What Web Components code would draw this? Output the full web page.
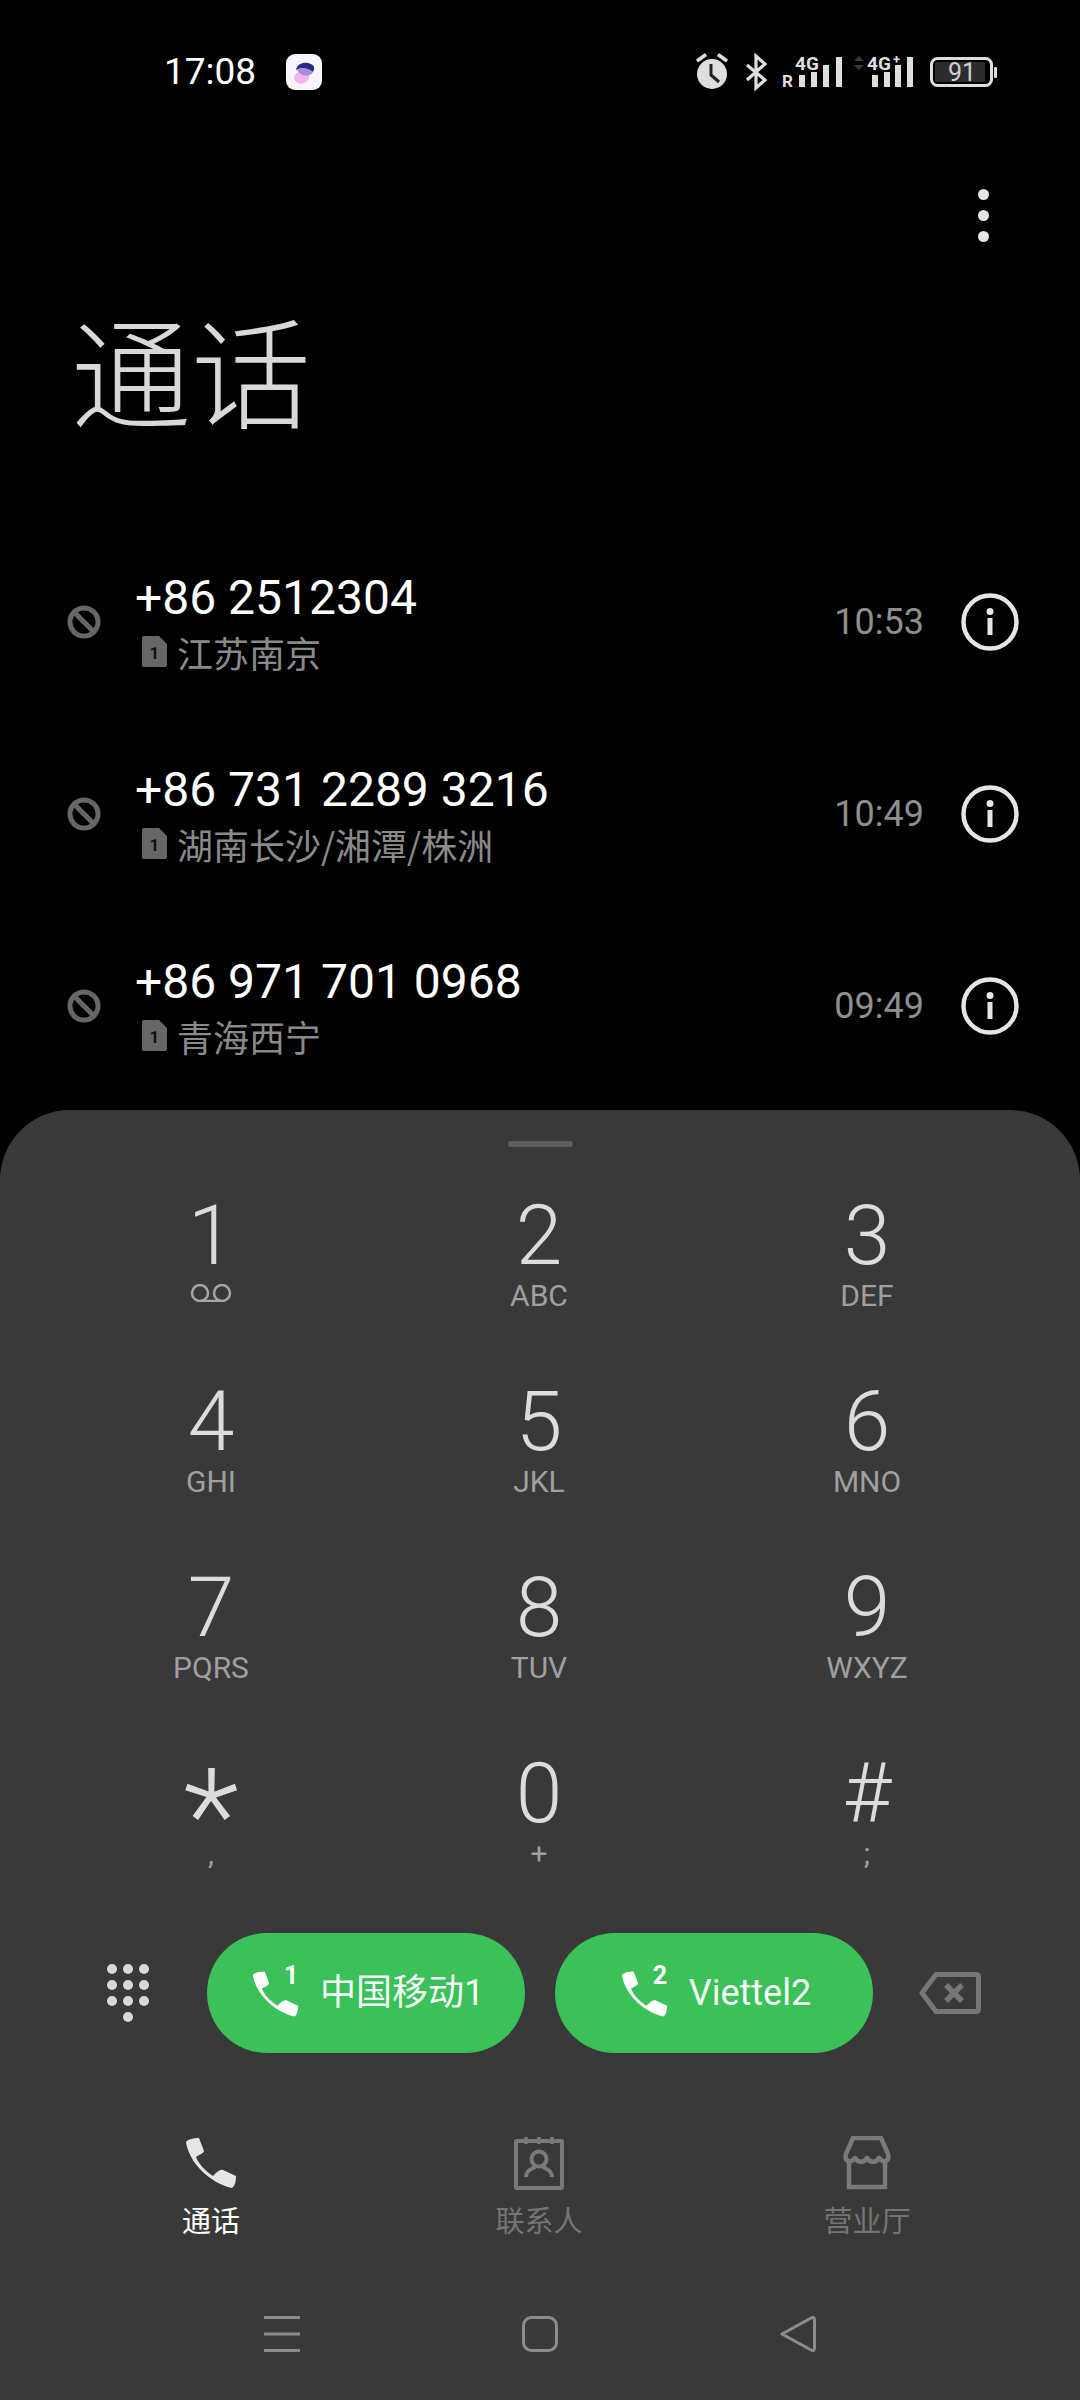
<!DOCTYPE html>
<html lang="zh-CN">
<head>
<meta charset="utf-8">
<title>通话</title>
<style>
html,body{margin:0;padding:0;background:#000}
body{font-family:Roboto,"Noto Sans CJK SC",sans-serif}
</style>
</head>
<body>
<phone-app></phone-app>
<script>
const FONT='Roboto,"Noto Sans CJK SC",sans-serif';
const PHONE='M1 4C3 1 9 0 14 0L19 13C19 15 14 17 11 19C13 25 20 33 28 38C31 35 35 31 38 32L51 38C51 43 50 48 47 50C25 45 4 25 1 4Z';
function def(name,html){
  customElements.define(name,class extends HTMLElement{
    connectedCallback(){
      if(this.shadowRoot)return;
      const r=this.attachShadow({mode:'open'});
      r.innerHTML=typeof html==='function'?html(this):html;
    }
  });
}
def('status-bar',`<style>
:host{display:flex;align-items:flex-start;height:110px;box-sizing:border-box;padding:54px 0 0 164px;color:#fff;font:37px/36px ${FONT}}
.time{width:122px}
.app{width:36px;height:36px;flex:none}
.right{margin-left:auto;margin-right:80px;flex:none;display:block;margin-top:-2px}
</style>
<span class="time">17:08</span>
<svg class="app" viewBox="0 0 36 36"><rect width="36" height="36" rx="9" fill="#f7f5fa"/><path d="M8 25C8 20 12 17 18 18C23 19 25 24 21 27C17 31 11 31 8 25Z" fill="#f5b5ee"/><path d="M10 16C11 10 17 8 22 9C27 10 30 13 27 18C22 14 15 13 10 16Z" fill="#2c2a86"/><path d="M11 16C16 13 22 14 27 18C24 23 19 22 15 20C13 19 12 17 11 16Z" fill="#a48ce0"/></svg>
<svg class="right" width="310" height="40" viewBox="690 52 310 40" font-family="Roboto,sans-serif" font-weight="700">
<g fill="#dedede" stroke="none">
<circle cx="712" cy="74" r="15"/>
<path d="M697 61L706 54.500" stroke="#dedede" stroke-width="3.500" fill="none"/><path d="M727 61L718 54.500" stroke="#dedede" stroke-width="3.500" fill="none"/>
<path d="M711 64V75L719 82" stroke="#222" stroke-width="3" fill="none"/>
<path d="M747 65L765 80L756 88V56L765 64L747 80" fill="none" stroke="#dedede" stroke-width="3.200"/>
<text x="782" y="87" font-size="17">R</text>
<text x="795" y="70" font-size="19">4G</text>
<rect x="799" y="75" width="6" height="12"/><rect x="811" y="72" width="6" height="15"/><rect x="823" y="65" width="6" height="22"/><rect x="836" y="57" width="6" height="30"/>
<path d="M859 56L864 61H854Z M859 70L864 65H854Z" fill="#3c3c3c"/>
<text x="867" y="70" font-size="19">4G</text><text x="893" y="64" font-size="13">+</text>
<rect x="872" y="75" width="6" height="12"/><rect x="884" y="72" width="6" height="15"/><rect x="895" y="65" width="6" height="22"/><rect x="907" y="57" width="6" height="30"/>
<rect x="931.500" y="58.500" width="60" height="27" rx="6" fill="#000" stroke="#dedede" stroke-width="3"/>
<rect x="935" y="62" width="50" height="20" rx="2" fill="#2c2c2c"/>
<rect x="994" y="67" width="3" height="11" rx="1"/>
<text x="948" y="81" font-size="25" font-weight="400" fill="#cfcfcf">91</text>
</g></svg>`);
def('top-menu',`<style>
:host{display:flex;justify-content:flex-end;height:63px;padding:79px 91px 0 0}
i{display:block;width:11px;height:11px;border-radius:50%;background:#e4e4e4;margin-bottom:10px}
</style><div><i></i><i></i><i></i></div>`);
def('page-title',`<style>
:host{display:block;padding:43px 0 0 71px;height:229px;color:#d8d8d8;font:300 120px/146px "Noto Sans CJK SC",sans-serif}
</style><slot></slot>`);
def('call-row',t=>`<style>
:host{display:flex;align-items:center;height:192px;box-sizing:border-box;color:#fff;font-family:${FONT}}
.blk{width:34px;height:34px;margin-left:67px;flex:none}
.txt{margin-left:34px;flex:1;min-width:0}
.num{font-size:48px;line-height:54px;display:block}
.loc{display:flex;align-items:center;font:36px/44px "Noto Sans CJK SC",sans-serif;color:#8a8a8a;margin-top:5px}
.sim{width:25px;height:31px;margin:0 10px 0 7px;flex:none}
.time{font-size:36px;color:#8f8f8f;margin-right:37px}
.info{width:58px;height:58px;margin-right:61px;flex:none}
</style>
<svg class="blk" viewBox="0 0 34 34"><circle cx="17" cy="17" r="14" fill="none" stroke="#676767" stroke-width="5"/><path d="M7 7L27 27" stroke="#676767" stroke-width="5"/></svg>
<div class="txt"><span class="num">${t.getAttribute('num')}</span>
<div class="loc"><svg class="sim" viewBox="0 0 25 31"><path d="M2 0H17L25 8V29Q25 31 23 31H2Q0 31 0 29V2Q0 0 2 0Z" fill="#666"/><text x="12.500" y="23" text-anchor="middle" font-family="Roboto,sans-serif" font-weight="700" font-size="17" fill="#111">1</text></svg><span>${t.getAttribute('loc')}</span></div></div>
<span class="time">${t.getAttribute('time')}</span>
<svg class="info" viewBox="0 0 58 58"><circle cx="29" cy="29" r="26.500" fill="none" stroke="#e6e6e6" stroke-width="4.500"/><circle cx="29" cy="18.500" r="3.500" fill="#e6e6e6"/><rect x="26.500" y="25" width="5" height="17" fill="#e6e6e6"/></svg>`);
def('dial-key',t=>{
  const s=t.getAttribute('size')||'84',lh=t.getAttribute('lh')||'92';
  const sub=t.getAttribute('vm')!==null?`<svg width="42" height="18" viewBox="0 0 42 18" style="display:block;margin-top:6px"><circle cx="10" cy="9" r="8" fill="none" stroke="#a6a6a6" stroke-width="2.500"/><circle cx="32" cy="9" r="8" fill="none" stroke="#a6a6a6" stroke-width="2.500"/><path d="M10 17H32" stroke="#a6a6a6" stroke-width="2.500"/></svg>`:`<span class="sub">${t.getAttribute('sub')}</span>`;
  return `<style>
:host{display:flex;flex-direction:column;align-items:center;height:186px;font-family:${FONT}}
.d{display:flex;justify-content:center;height:88px;line-height:${lh}px;font-size:${s}px;font-weight:300;color:#dcdcdc}
.sub{font-size:30px;line-height:34px;color:#a0a0a0;margin-top:1px}
</style><div class="d">${t.getAttribute('d')}</div>${sub}`;
});
def('dial-pad',`<style>
:host{display:grid;grid-template-columns:repeat(3,328px);padding:0 47px;margin-top:43px}
</style><slot></slot>`);
def('call-button',t=>`<style>
:host{display:flex;align-items:center;justify-content:center;gap:24px;width:318px;height:120px;box-sizing:border-box;padding-left:4px;border-radius:60px;background:#3bc05a;color:#f4fff6;font:36px/44px ${FONT};flex:none}
.ic{position:relative;width:44px;height:44px;flex:none}
svg{display:block}
.sup{position:absolute;left:32px;top:-9px;font:700 25px/28px Roboto,sans-serif;color:#fff}
</style><div class="ic"><svg width="47" height="46" viewBox="0 0 52 50"><path d="${PHONE}" fill="#fff"/></svg><span class="sup">${t.getAttribute('sim')}</span></div><span><slot></slot></span>`);
def('action-row',`<style>
:host{display:flex;align-items:center;height:120px;margin-top:-1px}
.pad{width:44px;height:60px;margin:0 57px 0 106px;flex:none}
.gap{width:30px;flex:none}
.back{width:62px;height:42px;margin-left:46px;flex:none}
</style>
<svg class="pad" viewBox="0 0 44 60" fill="#d8d8d8"><circle cx="6" cy="6" r="5"/><circle cx="22" cy="6" r="5"/><circle cx="38" cy="6" r="5"/><circle cx="6" cy="22" r="5"/><circle cx="22" cy="22" r="5"/><circle cx="38" cy="22" r="5"/><circle cx="6" cy="38" r="5"/><circle cx="22" cy="38" r="5"/><circle cx="38" cy="38" r="5"/><circle cx="22" cy="54" r="5"/></svg>
<slot name="a"></slot><div class="gap"></div><slot name="b"></slot>
<svg class="back" viewBox="0 0 62 42" fill="none" stroke="#777" stroke-width="5"><path d="M17 2.500H57Q59.500 2.500 59.500 5V37Q59.500 39.500 57 39.500H17L3 21Z" stroke-linejoin="round"/><path d="M27 13L43 29M43 13L27 29" stroke-width="5.500"/></svg>`);
def('tab-item',t=>`<style>
:host{display:flex;flex-direction:column;align-items:center;font:29px/34px "Noto Sans CJK SC",sans-serif;color:${t.hasAttribute('active')?'#fff':'#757575'}}
::slotted(svg){display:block;width:54px;height:54px;margin-bottom:12px}
</style><slot name="i"></slot><slot></slot>`);
def('tab-bar',`<style>
:host{display:grid;grid-template-columns:repeat(3,328px);padding:83px 47px 0}
</style><slot></slot>`);
def('nav-bar',`<style>
:host{display:flex;justify-content:space-between;padding:0 264px;margin-top:80px;align-items:center}
svg{display:block;flex:none}
</style>
<svg width="36" height="36" viewBox="0 0 36 36" fill="#8c8c8c"><rect y="0" width="36" height="3"/><rect y="16.500" width="36" height="3"/><rect y="33" width="36" height="3"/></svg>
<svg width="36" height="36" viewBox="0 0 36 36"><rect x="1.500" y="1.500" width="33" height="33" rx="8" fill="none" stroke="#8c8c8c" stroke-width="3"/></svg>
<svg width="36" height="36" viewBox="0 0 36 36"><path d="M2 18L32 1.500Q34.500 1 34.500 4V32Q34.500 35 32 34.500Z" fill="none" stroke="#8c8c8c" stroke-width="3" stroke-linejoin="round"/></svg>`);
def('dial-sheet',`<style>
:host{display:block;background:#393939;border-radius:70px 70px 0 0;height:1290px;box-sizing:border-box;padding-top:31px;overflow:hidden;flex:none}
.h{width:65px;height:6px;border-radius:3px;background:#5d5d5d;margin:0 auto}
</style><div class="h"></div><slot></slot>`);
def('phone-app',`<style>
:host{display:flex;flex-direction:column;width:1080px;height:2400px;background:#000;overflow:hidden}
.list{display:block;height:584px;padding-top:2px;flex:none}
</style>
<status-bar></status-bar>
<top-menu></top-menu>
<page-title>通话</page-title>
<div class="list">
<call-row num="+86 2512304" loc="江苏南京" time="10:53"></call-row>
<call-row num="+86 731 2289 3216" loc="湖南长沙/湘潭/株洲" time="10:49"></call-row>
<call-row num="+86 971 701 0968" loc="青海西宁" time="09:49"></call-row>
</div>
<dial-sheet>
<dial-pad>
<dial-key d="1" vm></dial-key><dial-key d="2" sub="ABC"></dial-key><dial-key d="3" sub="DEF"></dial-key>
<dial-key d="4" sub="GHI"></dial-key><dial-key d="5" sub="JKL"></dial-key><dial-key d="6" sub="MNO"></dial-key>
<dial-key d="7" sub="PQRS"></dial-key><dial-key d="8" sub="TUV"></dial-key><dial-key d="9" sub="WXYZ"></dial-key>
<dial-key d="*" sub="," size="130" lh="138"></dial-key><dial-key d="0" sub="+"></dial-key><dial-key d="#" sub=";"></dial-key>
</dial-pad>
<action-row><call-button slot="a" sim="1">中国移动1</call-button><call-button slot="b" sim="2">Viettel2</call-button></action-row>
<tab-bar>
<tab-item active><svg slot="i" viewBox="-1 -2 54 54"><path d="${PHONE}" fill="#e6e6e6"/></svg>通话</tab-item>
<tab-item><svg slot="i" viewBox="0 0 54 54" fill="none" stroke="#7a7a7a" stroke-width="4"><rect x="4" y="5" width="46" height="47" rx="1"/><path d="M14 1V8M27 1V8M40 1V8" stroke-width="3.500"/><circle cx="27" cy="23" r="7.500"/><path d="M14 41C14 34 20 33 23 31M40 41C40 34 34 33 31 31"/></svg>联系人</tab-item>
<tab-item><svg slot="i" viewBox="0 0 54 54" fill="none" stroke="#7a7a7a" stroke-width="4.500"><path d="M13 2H41L48 18C50 25 44 28 39 22C36 27 30 27 27 22C24 27 18 27 15 22C10 28 4 25 6 18Z" stroke-linejoin="round"/><path d="M9 24V51H45V24"/></svg>营业厅</tab-item>
</tab-bar>
<nav-bar></nav-bar>
</dial-sheet>`);
</script>
</body>
</html>
